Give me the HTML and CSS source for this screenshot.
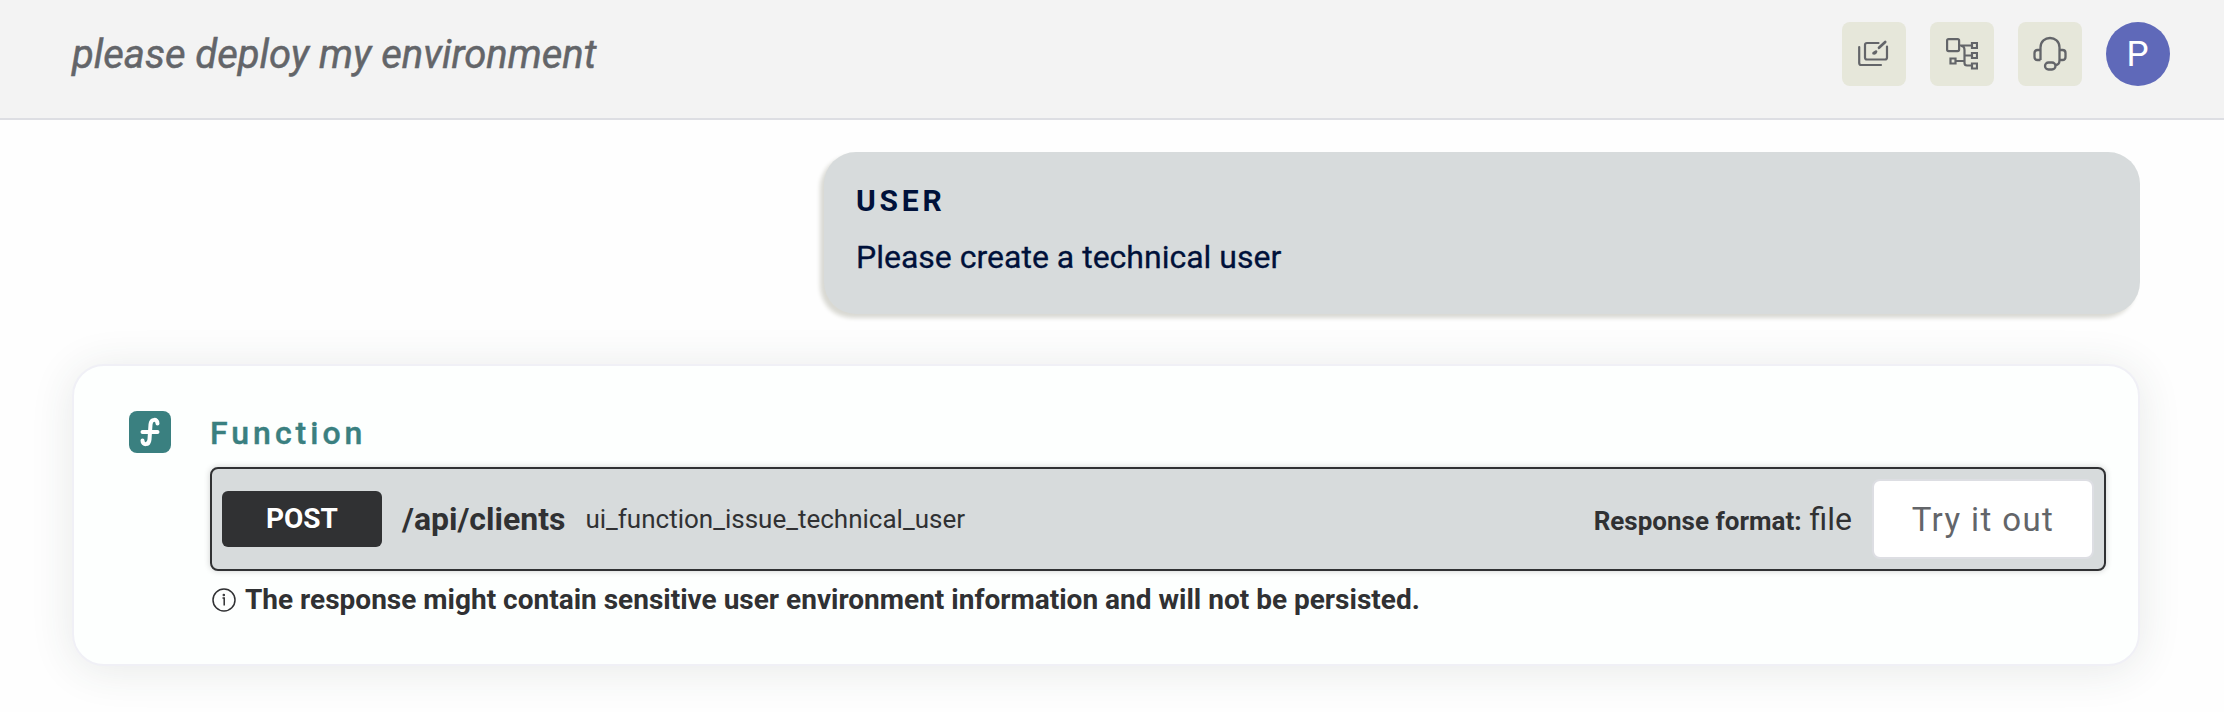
FILE: index.html
```html
<!DOCTYPE html>
<html lang="en">
<head>
<meta charset="utf-8">
<title>please deploy my environment</title>
<link rel="stylesheet" href="styles.css">
</head>
<body>
<header class="topbar">
  <h1 class="title">please deploy my environment</h1>
  <div class="actions">
    <button class="tool" aria-label="Canvas">
      <svg width="32" height="32" viewBox="0 0 32 32" fill="none" stroke="#636569" stroke-width="2.2" stroke-linecap="round" stroke-linejoin="round"><path d="M20.500 5H9Q7 5 7 7V19.500Q7 21.500 9 21.500H27Q29 21.500 29 19.500V8.500M1.200 9V25Q1.200 27 3.200 27H23"/><path d="M27.200 4 21 9.800" stroke-width="2.700"/><path d="M15.600 15.200Q17.400 15.600 18 13.600Z" stroke-width="2.800" fill="#636569"/></svg>
    </button>
    <button class="tool" aria-label="Structure">
      <svg width="32" height="32" viewBox="0 0 32 32" fill="none" stroke="#636569" stroke-width="2.2"><rect x="1.100" y="1.100" width="12" height="12" rx="1.500"/><path d="M13 7.500H26M15 8Q18.500 8 18.500 12V25Q18.500 27.500 21 27.500H26M18.500 17.500H26M9.500 23H18.500"/><path d="M26 5h5v5h-5zM26 15h5v5h-5zM26 25.500h5v5h-5zM4.500 20.500h5v5h-5z"/></svg>
    </button>
    <button class="tool" aria-label="Support">
      <svg width="36" height="36" viewBox="0 0 36 36" fill="none" stroke="#636569" stroke-width="2.3"><path d="M8.500 24V11.500C8.500 -1.200 27.500 -1.200 27.500 11.500V24C27.500 27 26 29 23.500 29"/><path d="M8.500 14H5.500Q2.500 14 2.500 17V21Q2.500 24 5.500 24H8.500M27.500 14H30.500Q33.500 14 33.500 17V21Q33.500 24 30.500 24H27.500"/><rect x="13" y="26.500" width="10.500" height="7" rx="3.500"/></svg>
    </button>
    <div class="avatar">P</div>
  </div>
</header>
<main class="chat">
  <section class="bubble">
    <h2 class="role">USER</h2>
    <p class="message">Please create a technical user</p>
  </section>
  <section class="card">
    <svg class="fn-icon" width="42" height="42" viewBox="0 0 42 42"><rect width="42" height="42" rx="8" fill="#3a8080"/><path d="M28.500 12.500C28.500 7.500 22 7.500 21.500 13.500L20.500 28.500C20 34.500 13.500 34.500 13.500 29.500M13.500 21H28.500" fill="none" stroke="#fff" stroke-width="4" stroke-linecap="round"/></svg>
    <div class="body">
      <h2 class="fn-title">Function</h2>
      <div class="operation">
        <span class="method">POST</span>
        <span class="path">/api/clients</span>
        <span class="name">ui_function_issue_technical_user</span>
        <span class="format"><b>Response format:</b><span class="kind">file</span></span>
        <button class="try">Try it out</button>
      </div>
      <p class="notice">
        <svg width="26" height="26" viewBox="0 0 26 26" fill="none" stroke="#303133" stroke-width="1.500"><circle cx="13" cy="13" r="11"/><path d="M11.500 11H13.200V18.500"/><circle cx="12.800" cy="8" r=".5"/></svg>
        <span>The response might contain sensitive user environment information and will not be persisted.</span>
      </p>
    </div>
  </section>
</main>
</body>
</html>
```
FILE: styles.css
```css
* { box-sizing: border-box; }
body { margin: 0; height: 712px; overflow: hidden; background: #fefefe; font-family: Roboto, sans-serif; color: #303133; }
h1, h2, p { margin: 0; }
button { padding: 0; font: inherit; }
.topbar { height: 120px; display: flex; align-items: flex-start; justify-content: space-between; padding: 22px 54px 0 72px; background: #f3f3f3; border-bottom: 2px solid #dddee3; }
.title { font-size: 40px; line-height: 66px; font-weight: 400; font-style: italic; color: #636569; -webkit-text-stroke: .5px #636569; }
.actions { display: flex; gap: 24px; }
.tool { width: 64px; height: 64px; border: 0; border-radius: 8px; background: #e6e7da; display: flex; align-items: center; justify-content: center; }
.avatar { width: 64px; height: 64px; border-radius: 50%; background: #5f69b9; color: #fff; font-size: 35px; line-height: 65px; text-align: center; padding-right: 1px; }
.chat { padding: 32px 84px 0 72px; display: flex; flex-direction: column; }
.bubble { align-self: flex-end; width: 1316px; height: 162px; border-radius: 32px; padding: 29px 32px; background: #d7dbdc; color: #00113a; box-shadow: -4px 4px 4px #d9d9d3; }
.role { font-size: 30px; line-height: 39px; font-weight: 700; letter-spacing: 3.800px; }
.message { margin-top: 18px; font-size: 32px; line-height: 38px; -webkit-text-stroke: .3px #00113a; }
.card { margin-top: 50px; height: 302px; display: flex; padding: 45px 32px 0 55px; border: 2px solid #f0f0f6; border-radius: 32px; background: #fdfffe; box-shadow: 0 4px 44px rgba(48, 64, 58, .11); }
.fn-icon { flex: none; }
.body { flex: 1; margin-left: 39px; }
.fn-title { margin-top: 3px; font-size: 32px; line-height: 38px; font-weight: 500; letter-spacing: 4px; color: #3a8080; -webkit-text-stroke: .4px #3a8080; }
.operation { margin-top: 15px; height: 104px; display: flex; align-items: center; padding: 0 10px; border: 2px solid #303133; border-radius: 8px; background: #d7dbdc; box-shadow: 0 0 6px rgba(0, 0, 0, .19); }
.method { width: 160px; height: 56px; border-radius: 6px; background: #303133; color: #fff; font-size: 28px; line-height: 56px; font-weight: 700; text-align: center; text-shadow: 0 2px 0 rgba(0, 0, 0, .1); }
.path { margin-left: 20px; font-size: 32px; font-weight: 700; }
.name { margin-left: 20px; font-size: 26px; }
.format { margin-left: auto; font-size: 26px; }
.kind { margin-left: 8px; font-size: 32px; }
.try { width: 222px; height: 80px; margin-left: 20px; border: 2px solid #dddee3; border-radius: 8px; background: #fff; color: #636569; font-size: 33px; letter-spacing: 1.400px; }
.notice { margin-top: 13px; padding-left: 1px; display: flex; align-items: center; gap: 8px; font-size: 28px; line-height: 32px; font-weight: 700; }
```
